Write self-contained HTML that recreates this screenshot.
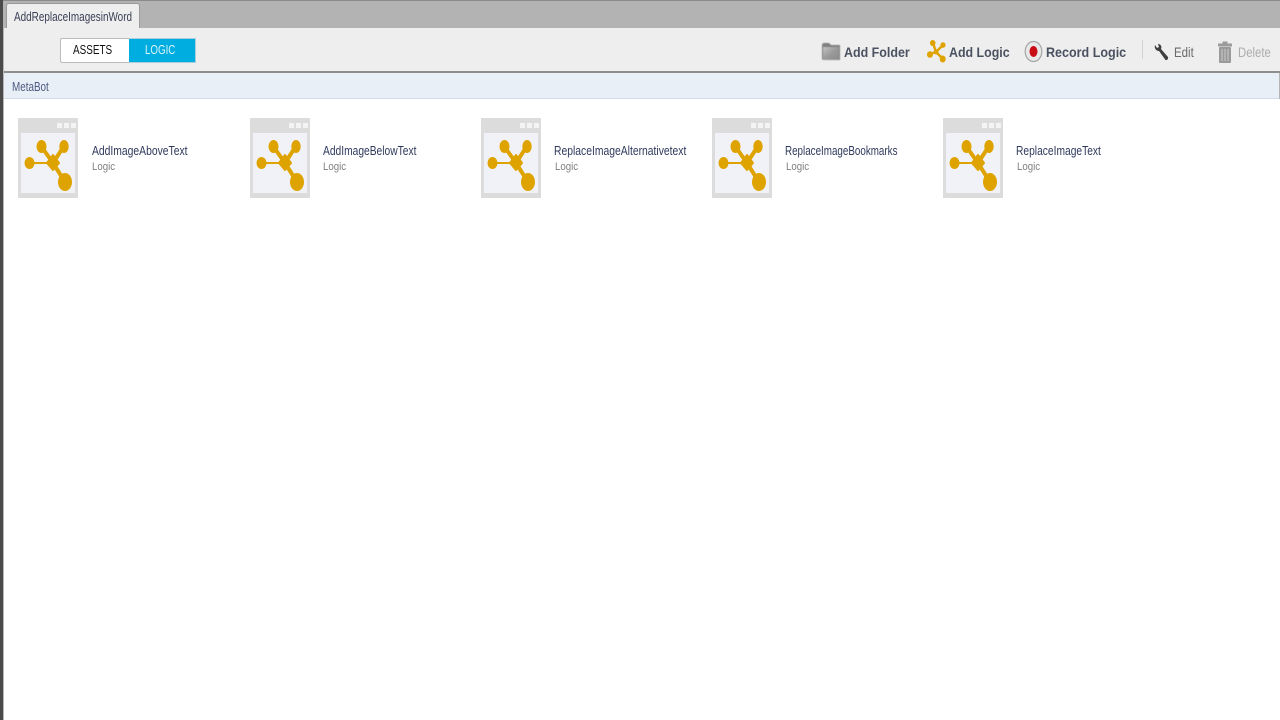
<!DOCTYPE html>
<html>
<head>
<meta charset="utf-8">
<style>
html,body{margin:0;padding:0;width:1280px;height:720px;overflow:hidden;background:#fff;font-family:"Liberation Sans",sans-serif}
.a{position:absolute}
.t{position:absolute;white-space:nowrap;transform-origin:0 50%;line-height:16px}
.n{font-size:12.5px;color:#2f3a5c;transform:scaleX(.828);top:143px}
.l{font-size:11px;color:#808080;transform:scaleX(.88);top:159px}
.b{font-size:14px;font-weight:bold;color:#4a5160;top:44px}
</style>
</head>
<body>
<!-- left border -->
<div class="a" style="left:0;top:0;width:3px;height:720px;background:#4a4a4a"></div>
<div class="a" style="left:3px;top:0;width:1px;height:720px;background:#b5b5b5"></div>
<!-- top tab strip -->
<div class="a" style="left:3px;top:0;width:1277px;height:28px;background:#b3b3b3;border-top:1px solid #8a8a8a;box-sizing:border-box"></div>
<div class="a" style="left:6px;top:3px;width:134px;height:25px;background:#eee;border:1px solid #9a9a9a;border-bottom:none;border-radius:3px 3px 0 0;box-sizing:border-box"></div>
<div class="t" style="left:14px;top:9px;font-size:12.500px;color:#3a3f55;transform:scaleX(.795)">AddReplaceImagesinWord</div>
<!-- toolbar -->
<div class="a" style="left:4px;top:28px;width:1276px;height:43px;background:#eee"></div>
<div class="a" style="left:4px;top:71px;width:1276px;height:2px;background:#8e8e8e"></div>
<!-- toggle -->
<div class="a" style="left:60px;top:38px;width:69px;height:25px;background:#fff;border:1px solid #bbb;border-right:none;box-sizing:border-box;border-radius:2px 0 0 2px"></div>
<div class="a" style="left:129px;top:38px;width:67px;height:25px;background:#00ade0;border:1px solid #a9cfdc;border-left:none;box-sizing:border-box"></div>
<div class="t" style="left:73px;top:42px;font-size:12.500px;color:#111;transform:scaleX(.793)">ASSETS</div>
<div class="t" style="left:145px;top:42px;font-size:12.500px;color:#dff4fb;transform:scaleX(.78)">LOGIC</div>
<!-- Toolbar icons -->
<svg class="a" style="left:820px;top:40px;filter:blur(.6px)" width="22" height="24" viewBox="0 0 22 24">
<defs><linearGradient id="f" x1="0" y1="0" x2="1" y2="1"><stop offset="0" stop-color="#c4c4c4"/><stop offset=".5" stop-color="#9a9a9a"/><stop offset="1" stop-color="#8a8a8a"/></linearGradient></defs>
<path d="M2 5 L3 3 L9 3 L11 5 L20 5 L20 20 L3 20 L2 19Z" fill="#7f7f7f"/>
<path d="M3 7 H19 V20 H3Z" fill="url(#f)"/>
</svg>
<svg class="a" style="left:925px;top:39px" width="22" height="24" viewBox="0 0 22 24">
<path d="M8 4 L11 13 M18 6 L11 13 M5 15 L11 13 M11 13 L18 20" stroke="#dfa300" stroke-width="2.400" fill="none"/>
<ellipse cx="7.700" cy="4" rx="2.800" ry="3" fill="#dfa300"/>
<ellipse cx="18" cy="6" rx="2.600" ry="2.800" fill="#dfa300"/>
<ellipse cx="5" cy="15.500" rx="3" ry="3.300" fill="#dfa300"/>
<circle cx="11" cy="13" r="2.500" fill="#dfa300"/>
<ellipse cx="17.700" cy="20" rx="3" ry="3.500" fill="#dfa300"/>
</svg>
<svg class="a" style="left:1023px;top:40px" width="21" height="24" viewBox="0 0 21 24">
<ellipse cx="10.500" cy="11.500" rx="8.300" ry="10" fill="#e8e8e8" stroke="#a5a5a5" stroke-width="1.200"/>
<ellipse cx="10.500" cy="11.500" rx="4" ry="5.500" fill="#c90d14"/>
</svg>
<div class="t b" style="left:844px;transform:scaleX(.89)">Add Folder</div>
<div class="t b" style="left:949px;transform:scaleX(.886)">Add Logic</div>
<div class="t b" style="left:1046px;transform:scaleX(.896)">Record Logic</div>
<div class="a" style="left:1142px;top:40px;width:1px;height:19px;background:#d4d4d4"></div>
<svg class="a" style="left:1153px;top:42px" width="16" height="20" viewBox="0 0 16 20">
<path d="M2 3 L4 6 L6 5 L5 2 C8 2 9 5 8 7 L15 15 C15.500 17 14 18.500 12.500 18 L6 9 C3 9 1 6 2 3Z" fill="#3f3f3f"/>
</svg>
<div class="t" style="left:1174px;top:44px;font-size:14px;color:#6a6a6a;transform:scaleX(.82)">Edit</div>
<svg class="a" style="left:1217px;top:41px" width="16" height="23" viewBox="0 0 16 23">
<rect x="5.500" y="0.500" width="5" height="2" fill="#9a9a9a"/>
<rect x="1" y="2.500" width="14" height="3" fill="#9a9a9a"/>
<rect x="2" y="6" width="12" height="16" rx="1" fill="#9a9a9a"/>
<path d="M5 8V20M8 8V20M11 8V20" stroke="#c9c9c9" stroke-width="1"/>
</svg>
<div class="t" style="left:1238px;top:44px;font-size:14px;color:#acacac;transform:scaleX(.81)">Delete</div>
<!-- breadcrumb -->
<div class="a" style="left:4px;top:73px;width:1275px;height:26px;background:#e8eff7;border-bottom:1px solid #cfdcec;box-sizing:border-box"></div>
<div class="a" style="left:1279px;top:73px;width:1px;height:26px;background:#b5b5b5"></div>
<div class="t" style="left:12px;top:79px;font-size:12.500px;color:#4c5a80;transform:scaleX(.79)">MetaBot</div>

<svg width="0" height="0" style="position:absolute">
<defs>
<g id="ic">
<rect x="0" y="0" width="60" height="80" fill="#dcdcdc"/>
<rect x="3" y="15" width="54" height="60" fill="#f0f2f8"/>
<rect x="39" y="5" width="5" height="5" fill="#f4f4f4"/>
<rect x="46" y="5" width="5" height="5" fill="#f4f4f4"/>
<rect x="53" y="5" width="5" height="5" fill="#f4f4f4"/>
<path d="M23 28 L35 45 M46 28 L35 45 M35 45 L47 64" stroke="#dfa300" stroke-width="4" fill="none"/>
<path d="M11 45 H35" stroke="#dfa300" stroke-width="2" fill="none"/>
<ellipse cx="11.500" cy="45" rx="5" ry="6" fill="#dfa300"/>
<ellipse cx="23.500" cy="28.500" rx="5" ry="6.500" fill="#dfa300"/>
<ellipse cx="46" cy="28.500" rx="4.700" ry="6.500" fill="#dfa300"/>
<path d="M35 37 L41 45 L35 52 L29 45Z" fill="#dfa300" stroke="#dfa300" stroke-width="2" stroke-linejoin="round"/>
<ellipse cx="47" cy="64" rx="7" ry="9" fill="#dfa300"/>
</g>
</defs>
</svg>

<svg class="a" style="left:18px;top:118px" width="60" height="80"><use href="#ic"/></svg>
<div class="t n" style="left:92px">AddImageAboveText</div>
<div class="t l" style="left:92px">Logic</div>

<svg class="a" style="left:250px;top:118px" width="60" height="80"><use href="#ic"/></svg>
<div class="t n" style="left:323px;transform:scaleX(.82)">AddImageBelowText</div>
<div class="t l" style="left:323px">Logic</div>

<svg class="a" style="left:481px;top:118px" width="60" height="80"><use href="#ic"/></svg>
<div class="t n" style="left:554px">ReplaceImageAlternativetext</div>
<div class="t l" style="left:555px">Logic</div>

<svg class="a" style="left:712px;top:118px" width="60" height="80"><use href="#ic"/></svg>
<div class="t n" style="left:785px;transform:scaleX(.786)">ReplaceImageBookmarks</div>
<div class="t l" style="left:786px">Logic</div>

<svg class="a" style="left:943px;top:118px" width="60" height="80"><use href="#ic"/></svg>
<div class="t n" style="left:1016px;transform:scaleX(.82)">ReplaceImageText</div>
<div class="t l" style="left:1017px">Logic</div>
</body>
</html>
